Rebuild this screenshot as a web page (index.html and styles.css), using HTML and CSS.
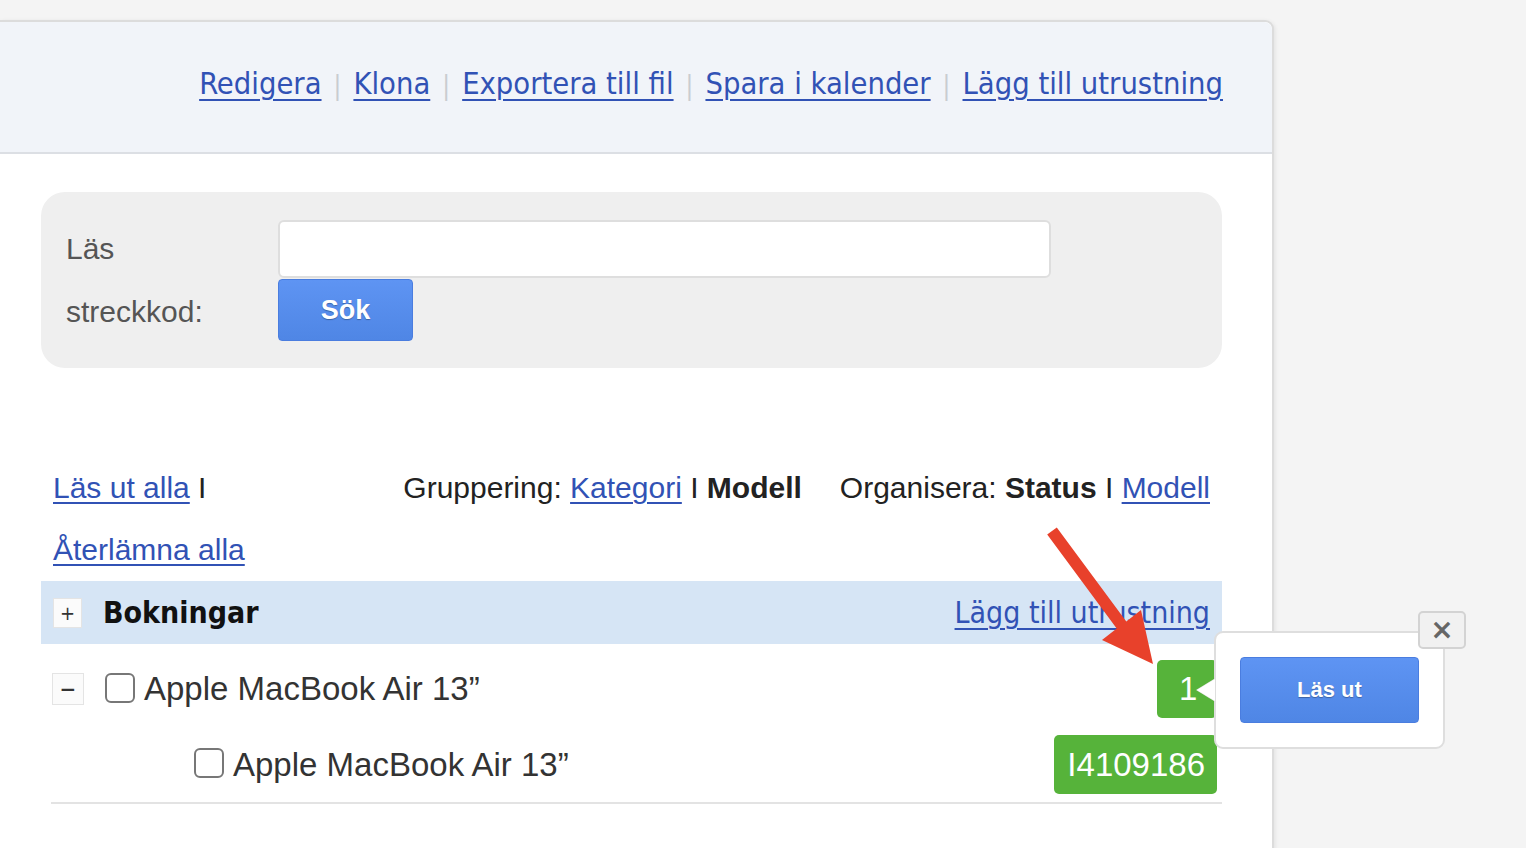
FILE: index.html
```html
<!DOCTYPE html>
<html lang="sv">
<head>
<meta charset="utf-8">
<title>Bokning</title>
<link rel="stylesheet" href="styles.css">
</head>
<body>
<div class="card">
  <header class="head">
    <nav class="actions">
      <a href="#">Redigera</a><span class="sep">|</span>
      <a href="#">Klona</a><span class="sep">|</span>
      <a href="#">Exportera till fil</a><span class="sep">|</span>
      <a href="#">Spara i kalender</a><span class="sep">|</span>
      <a href="#">Lägg till utrustning</a>
    </nav>
  </header>
  <main class="body">
    <section class="search">
      <label class="search-label" for="code">Läs streckkod:</label>
      <div class="search-fields">
        <input id="code" class="search-input" type="text">
        <button class="btn btn-search">Sök</button>
      </div>
    </section>

    <div class="toolbar">
      <div class="tool-left"><a href="#">Läs ut alla</a> I <a href="#">Återlämna alla</a></div>
      <div class="tool-right">
        <span>Gruppering: <a href="#">Kategori</a> I <b>Modell</b></span>
        <span>Organisera: <b>Status</b> I <a href="#">Modell</a></span>
      </div>
    </div>

    <div class="group-row">
      <span class="tbox">+</span>
      <span class="group-title">Bokningar</span>
      <a class="group-link" href="#">Lägg till utrustning</a>
    </div>

    <div class="items">
      <div class="item item-model">
        <span class="tbox tbox-minus">−</span>
        <span class="check"></span>
        <span class="item-name">Apple MacBook Air 13”</span>
        <span class="badge">1</span>
      </div>
      <div class="item item-unit">
        <span class="check"></span>
        <span class="item-name">Apple MacBook Air 13”</span>
        <span class="badge">I4109186</span>
      </div>
    </div>
  </main>
</div>

<div class="popover">
  <span class="pop-arrow"></span>
  <button class="btn btn-checkout">Läs ut</button>
  <button class="pop-close">×</button>
</div>

<svg class="callout" width="140" height="170" viewBox="0 0 140 170">
  <polygon points="26.8,17.4 96.3,111.4 111,100 123,154 72,130 86.7,118.6 17.2,24.6" fill="#e8412b"/>
</svg>
</body>
</html>
```

FILE: styles.css
```css
* { box-sizing: border-box; }
html, body { margin: 0; padding: 0; }
body {
  background: #f4f4f4;
  font-family: "Liberation Sans", Arial, sans-serif;
  color: #222;
  height: 848px;
  overflow: hidden;
  position: relative;
}
a { color: #3152b5; text-decoration: underline; text-underline-offset: 4px; text-decoration-thickness: 2px; }

.card {
  margin-top: 20px;
  width: 1274px;
  background: #fff;
  border: 2px solid #dcdcdc;
  border-left: 0;
  border-radius: 0 9px 0 0;
  box-shadow: 1px 1px 4px rgba(0,0,0,0.08);
  height: 900px;
}
.head {
  height: 132px;
  background: #f1f4f9;
  border-bottom: 2px solid #dcdfe4;
  border-radius: 0 8px 0 0;
  display: flex;
  align-items: center;
  justify-content: flex-end;
  padding-right: 49px;
  padding-bottom: 8px;
}
.actions {
  font-family: "DejaVu Sans Condensed", "DejaVu Sans", sans-serif;
  font-stretch: condensed;
  font-size: 30.6px;
  display: flex;
  align-items: baseline;
}
.actions a { text-underline-offset: 5px; }
.sep { color: #c9ccd0; margin: 0 12px; font-size: 26px; }

.body { padding: 38px 0 0 41px; }

.search {
  width: 1181px;
  height: 176px;
  background: #efefef;
  border-radius: 24px;
  display: flex;
  padding: 28px 0 0 25px;
}
.search-label {
  width: 212px;
  padding-right: 60px;
  font-size: 30px;
  color: #555;
  line-height: 63px;
  margin-top: -3px;
}
.search-fields { display: flex; flex-direction: column; align-items: flex-start; }
.search-input {
  width: 773px;
  height: 58px;
  border: 2px solid #dedede;
  border-radius: 6px;
  background: #fff;
  margin: 0;
}
.btn {
  font-family: "Liberation Sans", Arial, sans-serif;
  font-weight: bold;
  color: #fff;
  background: linear-gradient(#5e94f3, #4f86e5);
  border: 1px solid #4a7ddf;
  border-radius: 4px;
  text-shadow: 0 1px 1px rgba(0,0,0,0.3);
  cursor: pointer;
}
.btn-search {
  width: 135px;
  height: 62px;
  font-size: 27px;
  margin-top: 1px;
}

.toolbar {
  width: 1181px;
  margin-top: 89px;
  display: flex;
  padding: 0 12px;
  font-size: 30px;
  line-height: 62px;
}
.tool-left { width: 250px; }
.tool-right {
  flex: 1;
  display: flex;
  justify-content: flex-end;
  gap: 38px;
  align-self: flex-start;
}

.group-row {
  width: 1181px;
  height: 63px;
  background: #d6e5f5;
  display: flex;
  align-items: center;
  padding: 0 12px;
  font-family: "DejaVu Sans Condensed", "DejaVu Sans", sans-serif;
  font-stretch: condensed;
  font-size: 30px;
}
.tbox {
  width: 29px;
  height: 30px;
  background: #fbfbfb;
  border: 1px solid #e4e4e4;
  display: flex;
  align-items: center;
  justify-content: center;
  font-family: "DejaVu Sans", sans-serif;
  font-size: 20px;
  color: #333;
  flex: none;
}
.group-title { font-weight: bold; margin-left: 21px; color: #111; }
.group-link { margin-left: auto; text-underline-offset: 5px; }

.items {
  width: 1171px;
  margin-left: 10px;
  border-bottom: 2px solid #e3e3e3;
}
.item {
  display: flex;
  align-items: center;
  font-size: 33px;
  color: #333;
  padding-right: 5px;
}
.item-model { padding-top: 16px; padding-bottom: 10px; padding-left: 1px; }
.item-unit { padding-top: 7px; padding-bottom: 8px; padding-left: 143px; }
.tbox-minus { width: 32px; height: 32px; font-weight: bold; }
.check {
  width: 30px;
  height: 30px;
  border: 2px solid #777;
  border-radius: 6px;
  background: #fff;
  flex: none;
  margin-top: -3px;
}
.item-model .check { margin-left: 21px; }
.item-name { margin-left: 9px; }
.badge {
  margin-left: auto;
  background: #56b33a;
  color: #fff;
  border-radius: 5px;
  height: 59px;
  display: flex;
  align-items: center;
  padding: 0 12px 0 13px;
  font-size: 33px;
}
.item-model .badge { height: 58px; width: 60px; padding-left: 22px; }

.popover {
  position: absolute;
  left: 1214px;
  top: 631px;
  width: 231px;
  height: 118px;
  background: #fff;
  border: 2px solid #dedede;
  border-radius: 9px;
  padding: 24px 0 0 24px;
}
.pop-arrow {
  position: absolute;
  left: -19px;
  top: 46px;
  width: 0;
  height: 0;
  border-top: 11px solid transparent;
  border-bottom: 11px solid transparent;
  border-right: 18px solid #fff;
  filter: drop-shadow(-1px 0 0 #e2e2e2);
}
.btn-checkout {
  width: 179px;
  height: 66px;
  font-size: 22px;
}
.pop-close {
  position: absolute;
  left: 202px;
  top: -22px;
  width: 48px;
  height: 38px;
  background: #f1f1f1;
  border: 2px solid #d3d3d3;
  border-radius: 5px;
  color: #666;
  font-family: "DejaVu Sans", sans-serif;
  font-weight: bold;
  font-size: 28px;
  line-height: 30px;
  padding: 0;
}
.callout {
  position: absolute;
  left: 1030px;
  top: 510px;
}
```
